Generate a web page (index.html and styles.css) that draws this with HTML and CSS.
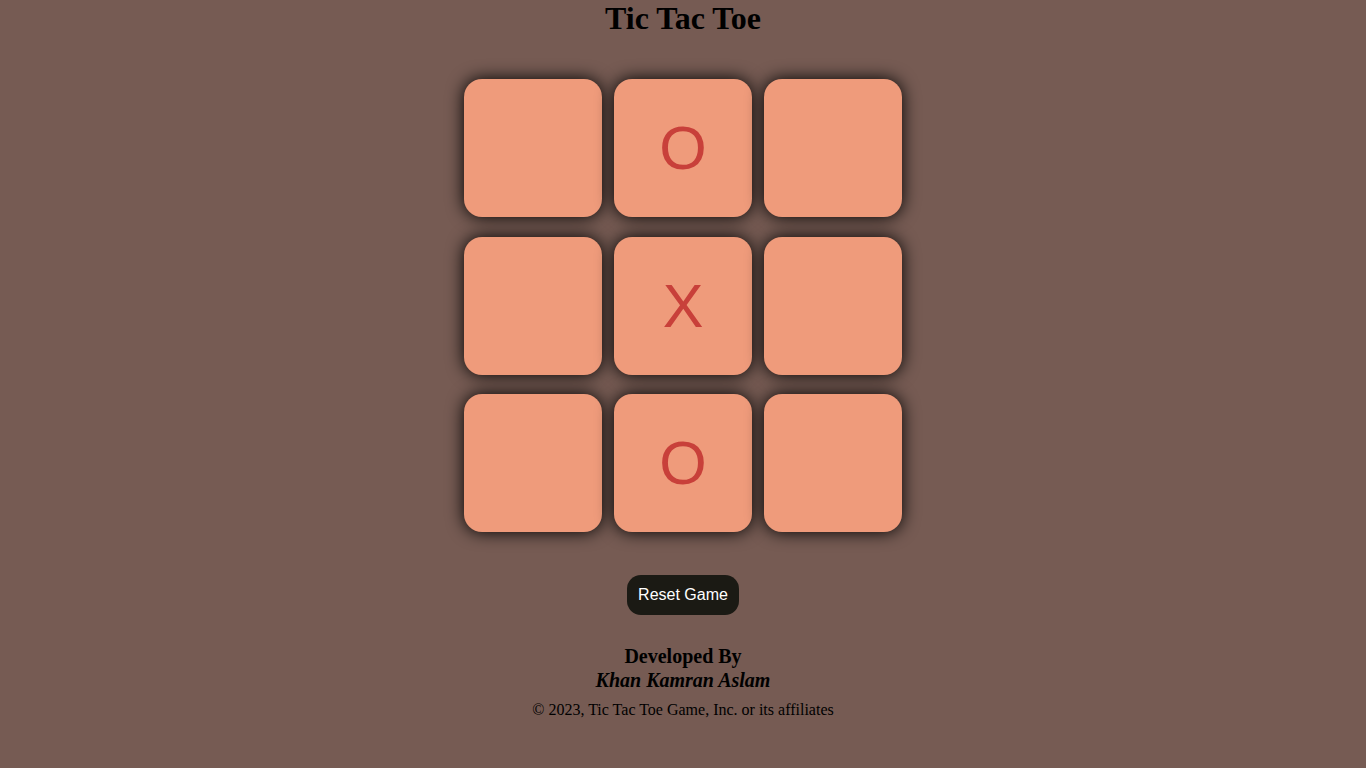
FILE: index.html
```html
<!DOCTYPE html>
<html>
<head>
<meta charset="utf-8">
<title>Tic Tac Toe</title>
<link rel="stylesheet" href="styles.css">
</head>
<body>
<h1 class="title">Tic Tac Toe</h1>
<main class="board">
  <div class="cell"></div>
  <div class="cell">O</div>
  <div class="cell"></div>
  <div class="cell"></div>
  <div class="cell">X</div>
  <div class="cell"></div>
  <div class="cell"></div>
  <div class="cell">O</div>
  <div class="cell"></div>
</main>
<div class="actions"><button class="reset">Reset Game</button></div>
<footer class="footer">
  <div class="dev">Developed By</div>
  <div class="author">Khan Kamran Aslam</div>
  <div class="copy">© 2023, Tic Tac Toe Game, Inc. or its affiliates</div>
</footer>
</body>
</html>
```
FILE: styles.css
```css
html, body {
  margin: 0;
  padding: 0;
}
body {
  background: #765b53;
  font-family: "Liberation Serif", "Times New Roman", serif;
  color: #000;
  text-align: center;
}
.title {
  margin: 0;
  font-size: 32px;
  line-height: 37px;
  font-weight: bold;
}
.board {
  margin: 42px auto 0;
  width: 438px;
  display: grid;
  grid-template-columns: repeat(3, 138px);
  grid-auto-rows: 138px;
  column-gap: 12px;
  row-gap: 19.5px;
}
.cell {
  background: #ef9b7b;
  border-radius: 18px;
  box-shadow: 0 0 17px #000;
  display: flex;
  align-items: center;
  justify-content: center;
  font-family: "Liberation Sans", Arial, sans-serif;
  font-size: 61px;
  color: #c8403a;
}
.actions {
  margin-top: 43px;
}
.reset {
  background: #1b1a14;
  color: #fff;
  border: none;
  border-radius: 14px;
  padding: 11px 11px;
  font-family: "Liberation Sans", Arial, sans-serif;
  font-size: 16px;
  line-height: 18px;
}
.footer {
  margin-top: 30px;
}
.dev {
  font-weight: bold;
  font-size: 20px;
  line-height: 23px;
}
.author {
  font-weight: bold;
  font-style: italic;
  font-size: 20px;
  line-height: 24px;
}
.copy {
  margin-top: 9px;
  font-size: 16px;
  line-height: 18px;
}
```
